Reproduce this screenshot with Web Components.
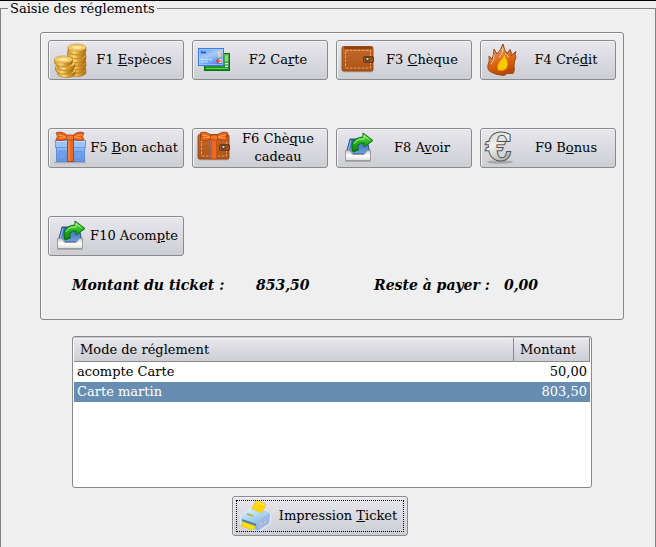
<!DOCTYPE html>
<html lang="fr">
<head>
<meta charset="utf-8">
<title>Saisie des réglements</title>
<style>
html{background:#efefef}
body{margin:0;background:#efefef;color:#000;font:13px/18px "DejaVu Serif",serif}
</style>
</head>
<body>
<payment-entry></payment-entry>
<script>
const define=(name,html,setup)=>{
  const t=document.createElement('template');
  t.innerHTML=html;
  customElements.define(name,class extends HTMLElement{
    constructor(){
      super();
      this.attachShadow({mode:'open'}).append(t.content.cloneNode(true));
    }
    connectedCallback(){ if(setup) setup(this,this.shadowRoot); }
  });
};

const coin=(x,y)=>`<path d="M${x-9} ${y}v3a9 4 0 0 0 18 0v-3z" fill="url(#g)" stroke="#a8701c" stroke-width=".6"/><ellipse cx="${x}" cy="${y}" rx="9" ry="3.600" fill="#f6cf69" stroke="#c48c2a" stroke-width=".6"/><ellipse cx="${x}" cy="${y}" rx="5.500" ry="2" fill="#fce7a4" stroke="#dfae4c" stroke-width=".6"/>`;

const wallet=`<defs><linearGradient id="w" x2="0" y2="1"><stop stop-color="#c46a2c"/><stop offset="1" stop-color="#ac5318"/></linearGradient></defs>
<path d="M1 27.500h30" stroke="#8886" stroke-width="2"/>
<path d="M1.500 2.500h28q1.500 0 1.500 2v21q0 1.500-1.500 1.500h-28q-1.500 0-1.500-1.500v-21q0-2 1.500-2z" fill="url(#w)" stroke="#9a4a18"/>
<path d="M2 4h28" stroke="#8f4312" stroke-width="2"/>
<path d="M3.500 7.500v16.500M4 6.500h24.500v17.500H3" fill="none" stroke="#eda468" stroke-dasharray="2.500 1.500"/>
<rect x="21.500" y="12.500" width="10" height="6" rx="1.500" fill="#a34d15" stroke="#74330c"/>
<rect x="23.500" y="13.500" width="4" height="3.500" rx="1" fill="#16423e"/><rect x="24.500" y="14" width="2" height="2" fill="#c3dcd8"/>`;

const bow=`<path d="M15 5Q8-2 2 1q3 3 0 7 7 2 13-2z" fill="#e8641b" stroke="#a8400b" stroke-width=".8"/><path d="M17 5q7-7 13-4-3 3 0 7-7 2-13-2z" fill="#e8641b" stroke="#a8400b" stroke-width=".8"/><path d="M4 3q5 0 9 3M28 3q-5 0-9 3M5 6l7-1M27 6l-7-1" stroke="#ff9c50" fill="none"/><rect x="12.500" y="3" width="7" height="5" rx="1.500" fill="#f0762b" stroke="#a8400b" stroke-width=".8"/>`;

const icons={
coins:`<defs><linearGradient id="g"><stop stop-color="#d3952a"/><stop offset=".35" stop-color="#fbdc7c"/><stop offset=".6" stop-color="#dea02c"/><stop offset="1" stop-color="#a3690f"/></linearGradient></defs>`
  +[[23,25.500],[22.500,22],[23,18.500],[22.500,15],[23,11.500],[22.500,7.500],[23,3.500],[12.500,26.500],[10.500,23],[12,19.500],[9.500,15.500]].map(p=>coin(...p)).join(''),
cards:`<defs><linearGradient id="c" x2=".6" y2="1"><stop stop-color="#5795ee"/><stop offset=".5" stop-color="#a8cbfb"/><stop offset="1" stop-color="#4c88e8"/></linearGradient><linearGradient id="gr" x2="0" y2="1"><stop stop-color="#58bb56"/><stop offset="1" stop-color="#158a1c"/></linearGradient></defs>
<rect x="6.500" y="9.500" width="25" height="17" fill="url(#gr)" stroke="#08720f"/><path d="M8 24.500h22" stroke="#62cf60"/><path d="M27 11.500h3v6h-3z" fill="#8fd48c"/><path d="M27 19h3v4h-3z" fill="#ecf3fb"/><path d="M27 21h3" stroke="#263f9b"/>
<rect x=".500" y="4.500" width="25" height="17" fill="url(#c)" stroke="#3b7be4"/><rect x="1.500" y="5.500" width="23" height="15" fill="none" stroke="#b5d2ff" stroke-opacity=".6"/>
<path d="M3 8.500h5" stroke="#1d57b4" stroke-width="1.500"/><path d="M3 15.500h12M3 18h8" stroke="#dcebff" stroke-dasharray="3 1" stroke-width=".8"/><rect x="19.500" y="7" width="3.500" height="6" fill="#d9d3be"/><circle cx="20" cy="17" r="2" fill="#e44a25"/><circle cx="22.500" cy="17" r="2" fill="#f6ead8"/><path d="M20 17h4" stroke="#d23720"/>`,
wallet,
flame:`<defs><linearGradient id="f" x2=".3" y2="1"><stop stop-color="#f5c69a"/><stop offset=".45" stop-color="#dd7a35"/><stop offset=".75" stop-color="#d85c05"/><stop offset="1" stop-color="#b84b06"/></linearGradient><linearGradient id="y" x2="0" y2="1"><stop stop-color="#f0a020"/><stop offset=".4" stop-color="#f6ce00"/><stop offset="1" stop-color="#eecb00"/></linearGradient></defs>
<path d="M17 0q-2 6-6 10L8 5q0 6-2 10l-3-3q1 5-1 9-1 5 3 7 5 3 13 3.500l3-2h6q2-2 1-8 0-5 2-8l-1-3 1-3-5 4q1-3-1-6l-3 4Q18 6 17 0z" fill="url(#f)" stroke="#954719"/>
<path d="M8 11q1 5-3 9M17 4q0 6-4 10M23 13q-2-1-4-4" fill="none" stroke="#fbd6ae" stroke-width=".8"/>
<path d="M18 10q-1 4-4 7-4 5-2 9 4 2 8-1 3-4 1-9-1-3-3-6z" fill="url(#y)" stroke="#e98312" stroke-width=".8"/>`,
gift:`<defs><linearGradient id="b" x2="0" y2="1"><stop stop-color="#91bdf8"/><stop offset="1" stop-color="#5f94e6"/></linearGradient></defs>
<path d="M0 30.500h32" stroke="#8888" stroke-width="1.500"/>
<rect x="2.500" y="14.500" width="28" height="15" fill="url(#b)" stroke="#5c89d3"/><rect x="5" y="19" width="7" height="8" fill="#6f9fea" stroke="#5a8bda" stroke-width=".6"/><rect x="21" y="19" width="7" height="8" fill="#6f9fea" stroke="#5a8bda" stroke-width=".6"/>
<rect x="1.500" y="8.500" width="30" height="7" fill="#9cc4fa" stroke="#6c99df"/><path d="M2 9.500h29" stroke="#c4deff"/>
<rect x="13.500" y="7" width="6" height="22.500" fill="#eb6b22" stroke="#ae460d"/><path d="M15 8v21" stroke="#ff9a52"/>${bow}`,
walletgift:wallet+`<rect x="13.500" y="4" width="5" height="23" fill="#ee6820" stroke="#c24d0e" stroke-width=".7"/><path d="M13 8v18" stroke="#6b7fc2" stroke-width=".8"/>${bow}`,
tray:`<defs><linearGradient id="t" x2="0" y2="1"><stop stop-color="#2c5fa4"/><stop offset="1" stop-color="#6fa3e2"/></linearGradient><linearGradient id="a" x2="0" y2="1"><stop stop-color="#7ee45e"/><stop offset=".5" stop-color="#26b31f"/><stop offset="1" stop-color="#0d780f"/></linearGradient><linearGradient id="s" x2="0" y2="1"><stop stop-color="#c9c9c9"/><stop offset=".5" stop-color="#fdfdfd"/><stop offset="1" stop-color="#dedede"/></linearGradient></defs>
<path d="M8 7h17l3 15H4z" fill="url(#t)" stroke="#2c5286"/><path d="M9 8l-3 11" stroke="#9dc1ef"/>
<path d="M3.500 18.500h4l3.500 4h11l3.500-4h3v10h-25z" fill="url(#s)" stroke="#999"/><path d="M3 29.500h26" stroke="#7776"/>
<path d="M11 20Q8 11 14 7q3-2 7-2V1l10 7.500L22 15v-4q-4-.5-6 2-1 2 .5 5z" fill="url(#a)" stroke="#08700c"/><path d="M12 12q2-5 10-5V3.500l5 4" fill="none" stroke="#b0f59a" stroke-width=".9"/>`,
euro:`<defs><linearGradient id="e" x2=".4" y2="1"><stop stop-color="#b4b6b3"/><stop offset=".5" stop-color="#f2f2ef"/><stop offset="1" stop-color="#a9aba7"/></linearGradient></defs>
<ellipse cx="14" cy="30" rx="13" ry="1.800" fill="#777" opacity=".45"/>
<text x="0" y="28" font-family="DejaVu Serif" font-weight="bold" font-size="37" paint-order="stroke" fill="url(#e)" stroke="#50524f" stroke-width="2">€</text>`,
printer:`<defs><linearGradient id="p" x2=".5" y2="1"><stop stop-color="#e4f5fd"/><stop offset=".5" stop-color="#a5d5ee"/><stop offset="1" stop-color="#86a9d6"/></linearGradient></defs>
<path d="M3 16l10-8q11-1 18 4l2 2-1 10-12 8L3 26z" fill="#b9cff5" stroke="#e6f0fc"/>
<path d="M3 17l9-8q12 0 20 4l-11 7-1 10-3-1V25L4 21z" fill="url(#p)"/>
<path d="M21 20l11-7-1 10-11 7z" fill="#9db6ee"/>
<path d="M4 19l14 5v2L4 21z" fill="#4d7598"/>
<path d="M5 22l12 4-2 4-12-4z" fill="#ffe000" stroke="#dfb700" stroke-width=".6"/>
<path d="M18 0l10 4-4 9-10-4z" fill="#ffd60c" stroke="#eebb10" stroke-width=".6"/><path d="M18.500 2l8 3" stroke="#fff176"/>
<path d="M9 14l6 2" stroke="#b7a932" stroke-width="1.500"/><circle cx="23" cy="24" r="1" fill="#fc3"/><circle cx="27" cy="22" r="1" fill="#fc3"/>`
};

define('pay-icon',`<style>:host{display:block;width:32px;height:32px}svg{display:block;overflow:visible}</style><svg width="32" height="32" viewBox="0 0 32 32" aria-hidden="true"></svg>`,
  (el,root)=>{root.querySelector('svg').innerHTML=icons[el.getAttribute('name')];});

define('pay-button',`<style>
:host{display:block}
button{position:relative;display:grid;grid-template-columns:32px 1fr;column-gap:2px;align-items:center;box-sizing:border-box;width:100%;min-height:40px;margin:0;padding:0 3px 0 5px;border:1px solid #898a8e;border-radius:3px;background:linear-gradient(#e7e7ed,#cdcdd4);box-shadow:inset 1px 1px #f4f4f8;color:#000;font:inherit;text-align:center}
:host([current]) button::after{content:"";position:absolute;inset:3px;border:1px dotted #000}
</style><button type="button"><pay-icon></pay-icon><span><slot></slot></span></button>`,
  (el,root)=>{
    const icon=document.createElement('pay-icon');
    icon.setAttribute('name',el.getAttribute('icon'));
    root.querySelector('pay-icon').replaceWith(icon);
  });

define('pay-totals',`<style>
:host{display:block;font:italic bold 14px/20px "DejaVu Serif",serif}
dl{display:grid;grid-template-columns:184px 118px 130px auto;margin:0}
dt,dd{margin:0;white-space:nowrap}
</style><dl><dt>Montant du ticket :</dt><dd>853,50</dd><dt>Reste à payer :</dt><dd>0,00</dd></dl>`);

define('pay-list',`<style>
:host{display:block;box-sizing:border-box;min-height:152px;border:1px solid #898a8e;border-radius:3px;padding:1px;background:#fff;box-shadow:inset 0 1px #c4c4c8}
table{width:100%;border-spacing:0;table-layout:fixed}
.amount{width:76px}
th{box-sizing:border-box;height:24px;padding:0 6px;border:solid #898a8e;border-width:0 1px 1px 0;background:linear-gradient(#e7e7ed,#cdcdd4);box-shadow:inset 0 1px #f4f4f8;font-weight:normal;text-align:left}
td{height:20px;padding:0 3px;line-height:20px}
td:last-child{text-align:right}
tr[aria-selected] td{background:#678db2;color:#fff}
</style><table><colgroup><col><col class="amount"></colgroup>
<thead><tr><th scope="col">Mode de réglement</th><th scope="col">Montant</th></tr></thead>
<tbody><tr><td>acompte Carte</td><td>50,00</td></tr><tr aria-selected="true"><td>Carte martin</td><td>803,50</td></tr></tbody></table>`);

define('pay-panel',`<style>
:host{display:block;padding:7px;border:1px solid #868686;border-radius:3px;box-shadow:inset 1px 1px #fafafa}
.grid{display:grid;grid-template-columns:repeat(4,1fr);gap:48px 8px}
.foot{padding:19px 24px 17px}
</style><div class="grid"><slot></slot></div><div class="foot"><slot name="totals"></slot></div>`);

define('payment-entry',`<style>
:host{display:flex;flex-direction:column;min-height:100vh;box-sizing:border-box;border-top:1px solid #000}
fieldset{flex:1;min-width:0;margin:0;padding:16px 31px 11px 39px;border:1px solid #808080;border-bottom:0;box-sizing:border-box}
legend{margin-left:-32px;padding:0 2px;line-height:15px}
pay-list{margin:16px 32px 8px}
.print{width:176px;margin:0 auto}
.actions{padding-right:24px}
</style>
<fieldset><legend>Saisie des réglements</legend>
<pay-panel>
<pay-button icon="coins">F1 <u>E</u>spèces</pay-button>
<pay-button icon="cards">F2 Ca<u>r</u>te</pay-button>
<pay-button icon="wallet">F3 <u>C</u>hèque</pay-button>
<pay-button icon="flame">F4 Cré<u>d</u>it</pay-button>
<pay-button icon="gift">F5 <u>B</u>on achat</pay-button>
<pay-button icon="walletgift">F6 Chè<u>q</u>ue<br>cadeau</pay-button>
<pay-button icon="tray">F8 A<u>v</u>oir</pay-button>
<pay-button icon="euro">F9 B<u>o</u>nus</pay-button>
<pay-button icon="tray">F10 Acom<u>p</u>te</pay-button>
<pay-totals slot="totals"></pay-totals>
</pay-panel>
<pay-list></pay-list>
<div class="actions"><pay-button class="print" icon="printer" current>Impression <u>T</u>icket</pay-button></div>
</fieldset>`);
</script>
</body>
</html>
